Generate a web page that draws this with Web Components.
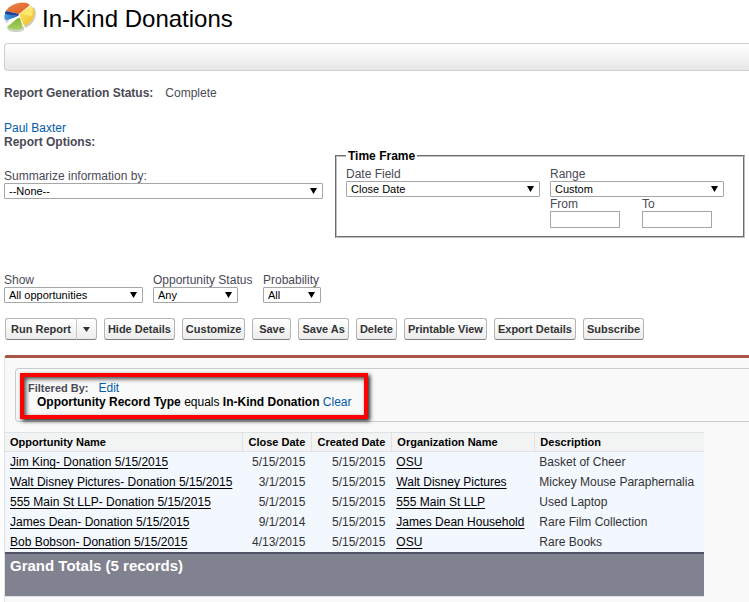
<!DOCTYPE html>
<html lang="en">
<head>
<meta charset="utf-8">
<title>In-Kind Donations</title>
<style>
  html, body { margin: 0; }
  body {
    font-family: "Liberation Sans", Arial, sans-serif;
    font-size: 12px;
    line-height: 14px;
    color: #4a4a56;
    background: #fff;
    --link: #015ba7;
    overflow-x: hidden;
  }
  report-page { min-height: 100vh; }
</style>
</head>
<body>
<report-page>
  <report-header>In-Kind Donations</report-header>
  <report-status label="Report Generation Status:">Complete</report-status>
  <report-options></report-options>
  <report-actions></report-actions>
  <report-panel>
    <report-filter></report-filter>
    <report-table></report-table>
  </report-panel>
</report-page>

<script>
const define = (name, markup, setup) => {
  const template = document.createElement("template");
  template.innerHTML = markup;
  customElements.define(name, class extends HTMLElement {
    constructor() {
      super();
      this.attachShadow({ mode: "open" }).append(template.content.cloneNode(true));
    }
    connectedCallback() {
      if (setup && !this.ready) { this.ready = true; setup(this, this.shadowRoot); }
    }
  });
};

define("report-page", `
<style>
  :host { display: flex; flex-direction: column; padding-left: 4px; box-sizing: border-box; }
  ::slotted(report-panel) { flex: 1; }
</style>
<slot></slot>`);

define("pie-logo", `
<style>:host { display: block; width: 32px; height: 32px; } svg { display: block; }</style>
<svg width="32" height="32" viewBox="0 0 32 32" aria-hidden="true">
  <defs>
    <linearGradient id="o" x1="0" y1="0" x2="1" y2="1"><stop offset="0" stop-color="#e98a52"/><stop offset="1" stop-color="#e0591a"/></linearGradient>
    <linearGradient id="b" x1="0" y1="0" x2="1" y2="0"><stop offset="0" stop-color="#4aa3e0"/><stop offset="1" stop-color="#1c62b4"/></linearGradient>
    <linearGradient id="y" x1="0" y1="0" x2="1" y2="1"><stop offset="0" stop-color="#fdea62"/><stop offset="1" stop-color="#efb92e"/></linearGradient>
    <linearGradient id="g" x1="0" y1="0" x2="0" y2="1"><stop offset="0" stop-color="#7fb32e"/><stop offset="1" stop-color="#a8d169"/></linearGradient>
  </defs>
  <path d="M30 5 C33 9 32 16 29 20 C27 23 24 25 21 26 L20 22Z" fill="#cfccb8"/>
  <path d="M3 25 L4 28 C9 31 15 31 20 28 L20 25Z" fill="#ced4c2"/>
  <path d="M0 14 L0 17 C1 19 2 20 3 21 L5 19Z" fill="#c6d0da"/>
  <path d="M2 9 C5 3 15 -1 23 1 L26 3 L15 12Z" fill="url(#o)"/>
  <path d="M2 9 L15 12 L14 14 L1 13 C1 11 1 10 2 9Z" fill="#1b3f93"/>
  <path d="M1 12 L14 14 L4 18 L2 18 C0 16 0 14 1 12Z" fill="url(#b)"/>
  <path d="M27 4 C32 8 31 13 28 18 C26 21 23 23 20 24 L15 12Z" fill="url(#y)"/>
  <path d="M27 4 L28 5 C29 8 29 11 28 14 L16 12Z" fill="#fae76c"/>
  <path d="M14 16 L16 16 L19 26 C13 29 7 28 3 25Z" fill="url(#g)"/>
</svg>`);

define("report-header", `
<style>
  :host { display: block; }
  .title { display: flex; align-items: flex-start; gap: 6px; padding-top: 2px; height: 43px; box-sizing: border-box; }
  h1 { margin: 3px 0 0; font-size: 24px; line-height: 28px; font-weight: 400; color: #000; }
  .bar {
    height: 28px; box-sizing: border-box;
    border: 1px solid #cfcfcf; border-right: 0; border-radius: 4px 0 0 4px;
    background: linear-gradient(#fff, #e7e7e7);
  }
</style>
<div class="title"><pie-logo></pie-logo><h1><slot></slot></h1></div>
<div class="bar"></div>`);

define("report-status", `
<style>
  :host { display: flex; gap: 12px; padding: 15px 0 21px; }
</style>
<b></b><span><slot></slot></span>`,
(host, root) => { root.querySelector("b").textContent = host.getAttribute("label"); });

define("select-field", `
<style>
  :host { display: flex; flex-direction: column; }
  label { white-space: nowrap; }
  .box { display: grid; align-items: center; width: var(--select-width, 100%); }
  select, .arrow { grid-area: 1 / 1; }
  select {
    appearance: none; width: 100%; height: 16px; margin: 0; padding: 0 16px 0 4px;
    border: 1px solid #a6a6a6; border-radius: 1px; background: #fff; color: #000;
    font: 11px/14px "Liberation Sans", Arial, sans-serif;
  }
  .arrow {
    justify-self: end; margin-right: 6px; width: 7px; height: 6px; background: #000;
    clip-path: polygon(0 0, 100% 0, 50% 100%); pointer-events: none;
  }
</style>
<label for="s"></label>
<div class="box"><select id="s"></select><span class="arrow"></span></div>`,
(host, root) => {
  root.querySelector("label").textContent = host.getAttribute("label");
  root.querySelector("select").add(new Option(host.getAttribute("value")));
});

define("text-field", `
<style>
  :host { display: flex; flex-direction: column; }
  input {
    width: 70px; height: 17px; box-sizing: border-box; margin: 0; padding: 0 2px;
    border: 1px solid #a6a6a6; background: #fff;
    font: 11px "Liberation Sans", Arial, sans-serif;
  }
</style>
<label for="i"></label><input id="i" type="text">`,
(host, root) => { root.querySelector("label").textContent = host.getAttribute("label"); });

define("report-options", `
<style>
  :host { display: block; }
  a { color: var(--link); text-decoration: none; }
  .who { display: flex; flex-direction: column; align-items: flex-start; }
  .main { display: grid; grid-template-columns: 319fr 410fr; gap: 12px; padding-right: 4px; }
  .summary { padding-top: 20px; }
  fieldset {
    min-width: 0; box-sizing: border-box; margin: 0; padding: 4px 9px 8px;
    border: 2px groove #c0c0c0;
  }
  legend { padding: 0 2px; color: #000; font-weight: 700; }
  .frame { display: grid; grid-template-columns: 194fr 174fr; align-items: start; gap: 10px; padding-right: 10px; }
  .dates { display: flex; gap: 22px; }
  .show { display: flex; gap: 10px; padding-top: 35px; }
  .all { width: 139px; }
  .status { --select-width: 85px; min-width: 100px; }
  .prob { --select-width: 58px; }
</style>
<div class="who"><a href="#">Paul Baxter</a><b>Report Options:</b></div>
<div class="main">
  <select-field class="summary" label="Summarize information by:" value="--None--"></select-field>
  <fieldset>
    <legend>Time Frame</legend>
    <div class="frame">
      <select-field label="Date Field" value="Close Date"></select-field>
      <div>
        <select-field label="Range" value="Custom"></select-field>
        <div class="dates"><text-field label="From"></text-field><text-field label="To"></text-field></div>
      </div>
    </div>
  </fieldset>
</div>
<div class="show">
  <select-field class="all" label="Show" value="All opportunities"></select-field>
  <select-field class="status" label="Opportunity Status" value="Any"></select-field>
  <select-field class="prob" label="Probability" value="All"></select-field>
</div>`);

define("report-actions", `
<style>
  :host { display: flex; gap: 7px; padding: 15px 0 15px 1px; }
  button {
    height: 22px; min-width: 39px; box-sizing: border-box; margin: 0; padding: 0 3px;
    border: 1px solid #b5b5b5; border-bottom-color: #7f7f7f; border-radius: 3px;
    background: linear-gradient(#fff, #ececec); color: #333; white-space: nowrap;
    font: 700 11px/20px "Liberation Sans", Arial, sans-serif;
  }
  .split { display: flex; }
  .split button:first-child { border-radius: 3px 0 0 3px; border-right: 0; padding: 0 5px; }
  .split button:last-child {
    display: grid; place-items: center; min-width: 21px; padding: 0;
    border-radius: 0 3px 3px 0; border-left-color: #c8c8c8;
  }
</style>
<div class="split">
  <button type="button">Run Report</button>
  <button type="button" aria-label="More run options"><svg width="7" height="5" viewBox="0 0 7 5"><path d="M0 0h7L3.500 5z" fill="#333"/></svg></button>
</div>
<button type="button">Hide Details</button>
<button type="button">Customize</button>
<button type="button">Save</button>
<button type="button">Save As</button>
<button type="button">Delete</button>
<button type="button">Printable View</button>
<button type="button">Export Details</button>
<button type="button">Subscribe</button>`);

define("report-panel", `
<style>
  :host {
    display: block; border-top: 3px solid #a85548; border-left: 1px solid #dfe2e5;
    border-top-left-radius: 3px; background: #f9f9f9;
  }
</style>
<slot></slot>`);

define("report-filter", `
<style>
  :host {
    display: block; margin: 10px 0 10px 10px; padding: 4px 4px 2px;
    border: 1px solid #c7ccce; border-right: 0; border-radius: 4px 0 0 4px;
  }
  .mark {
    width: fit-content; padding: 4px 12px 6px 4px; border: 4px solid #f00;
    box-shadow: 2px 2px 4px 0 #222, inset 2px 2px 4px 0 #444;
  }
  .by { display: flex; gap: 10px; }
  .by b { font-size: 11px; }
  .rule { padding-left: 9px; color: #000; }
  a { color: var(--link); text-decoration: none; }
</style>
<div class="mark">
  <div class="by"><b>Filtered By:</b><a href="#">Edit</a></div>
  <div class="rule"><b>Opportunity Record Type</b> equals <b>In-Kind Donation</b> <a href="#">Clear</a></div>
</div>`);

define("report-table", `
<style>
  :host { display: block; width: 94%; border-bottom: 1px solid #dfe2e5; }
  table { width: 100%; border-collapse: separate; border-spacing: 0; table-layout: fixed; }
  .close { width: 69px; }
  .created { width: 80px; }
  .org { width: 143px; }
  .text { width: 170px; }
  th, td { box-sizing: border-box; text-align: left; white-space: nowrap; }
  th {
    height: 20px; padding: 0 5px; font-size: 11px; color: #000; background: #f2f3f3;
    border-top: 1px solid #dfe2e5; border-bottom: 1px solid #dfe2e5;
  }
  th + th { border-left: 1px solid #dfe2e5; }
  tbody td { height: 20px; padding: 0 5px; background: #f3f7fe; color: #333; }
  th.num, tbody .num { text-align: right; padding: 0 6px 0 0; }
  a { color: #000; text-decoration: underline; text-underline-offset: 2px; text-decoration-skip-ink: none; }
  tfoot td {
    height: 44px; padding: 4px 5px 0; vertical-align: top; border-top: 2px solid #515466;
    background: #81828f; color: #fff; font-weight: 700; font-size: 15px; line-height: 16px;
  }
</style>
<table>
  <colgroup><col><col class="close"><col class="created"><col class="org"><col class="text"></colgroup>
  <thead><tr><th>Opportunity Name</th><th class="num">Close Date</th><th class="num">Created Date</th><th>Organization Name</th><th>Description</th></tr></thead>
  <tbody></tbody>
  <tfoot><tr><td colspan="5">Grand Totals (5 records)</td></tr></tfoot>
</table>`,
(host, root) => {
  const rows = [
    ["Jim King- Donation 5/15/2015", "5/15/2015", "5/15/2015", "OSU", "Basket of Cheer"],
    ["Walt Disney Pictures- Donation 5/15/2015", "3/1/2015", "5/15/2015", "Walt Disney Pictures", "Mickey Mouse Paraphernalia"],
    ["555 Main St LLP- Donation 5/15/2015", "5/1/2015", "5/15/2015", "555 Main St LLP", "Used Laptop"],
    ["James Dean- Donation 5/15/2015", "9/1/2014", "5/15/2015", "James Dean Household", "Rare Film Collection"],
    ["Bob Bobson- Donation 5/15/2015", "4/13/2015", "5/15/2015", "OSU", "Rare Books"],
  ];
  root.querySelector("tbody").innerHTML = rows.map(([name, close, created, org, text]) =>
    `<tr><td><a href="#">${name}</a></td><td class="num">${close}</td><td class="num">${created}</td><td><a href="#">${org}</a></td><td>${text}</td></tr>`).join("");
});
</script>
</body>
</html>
